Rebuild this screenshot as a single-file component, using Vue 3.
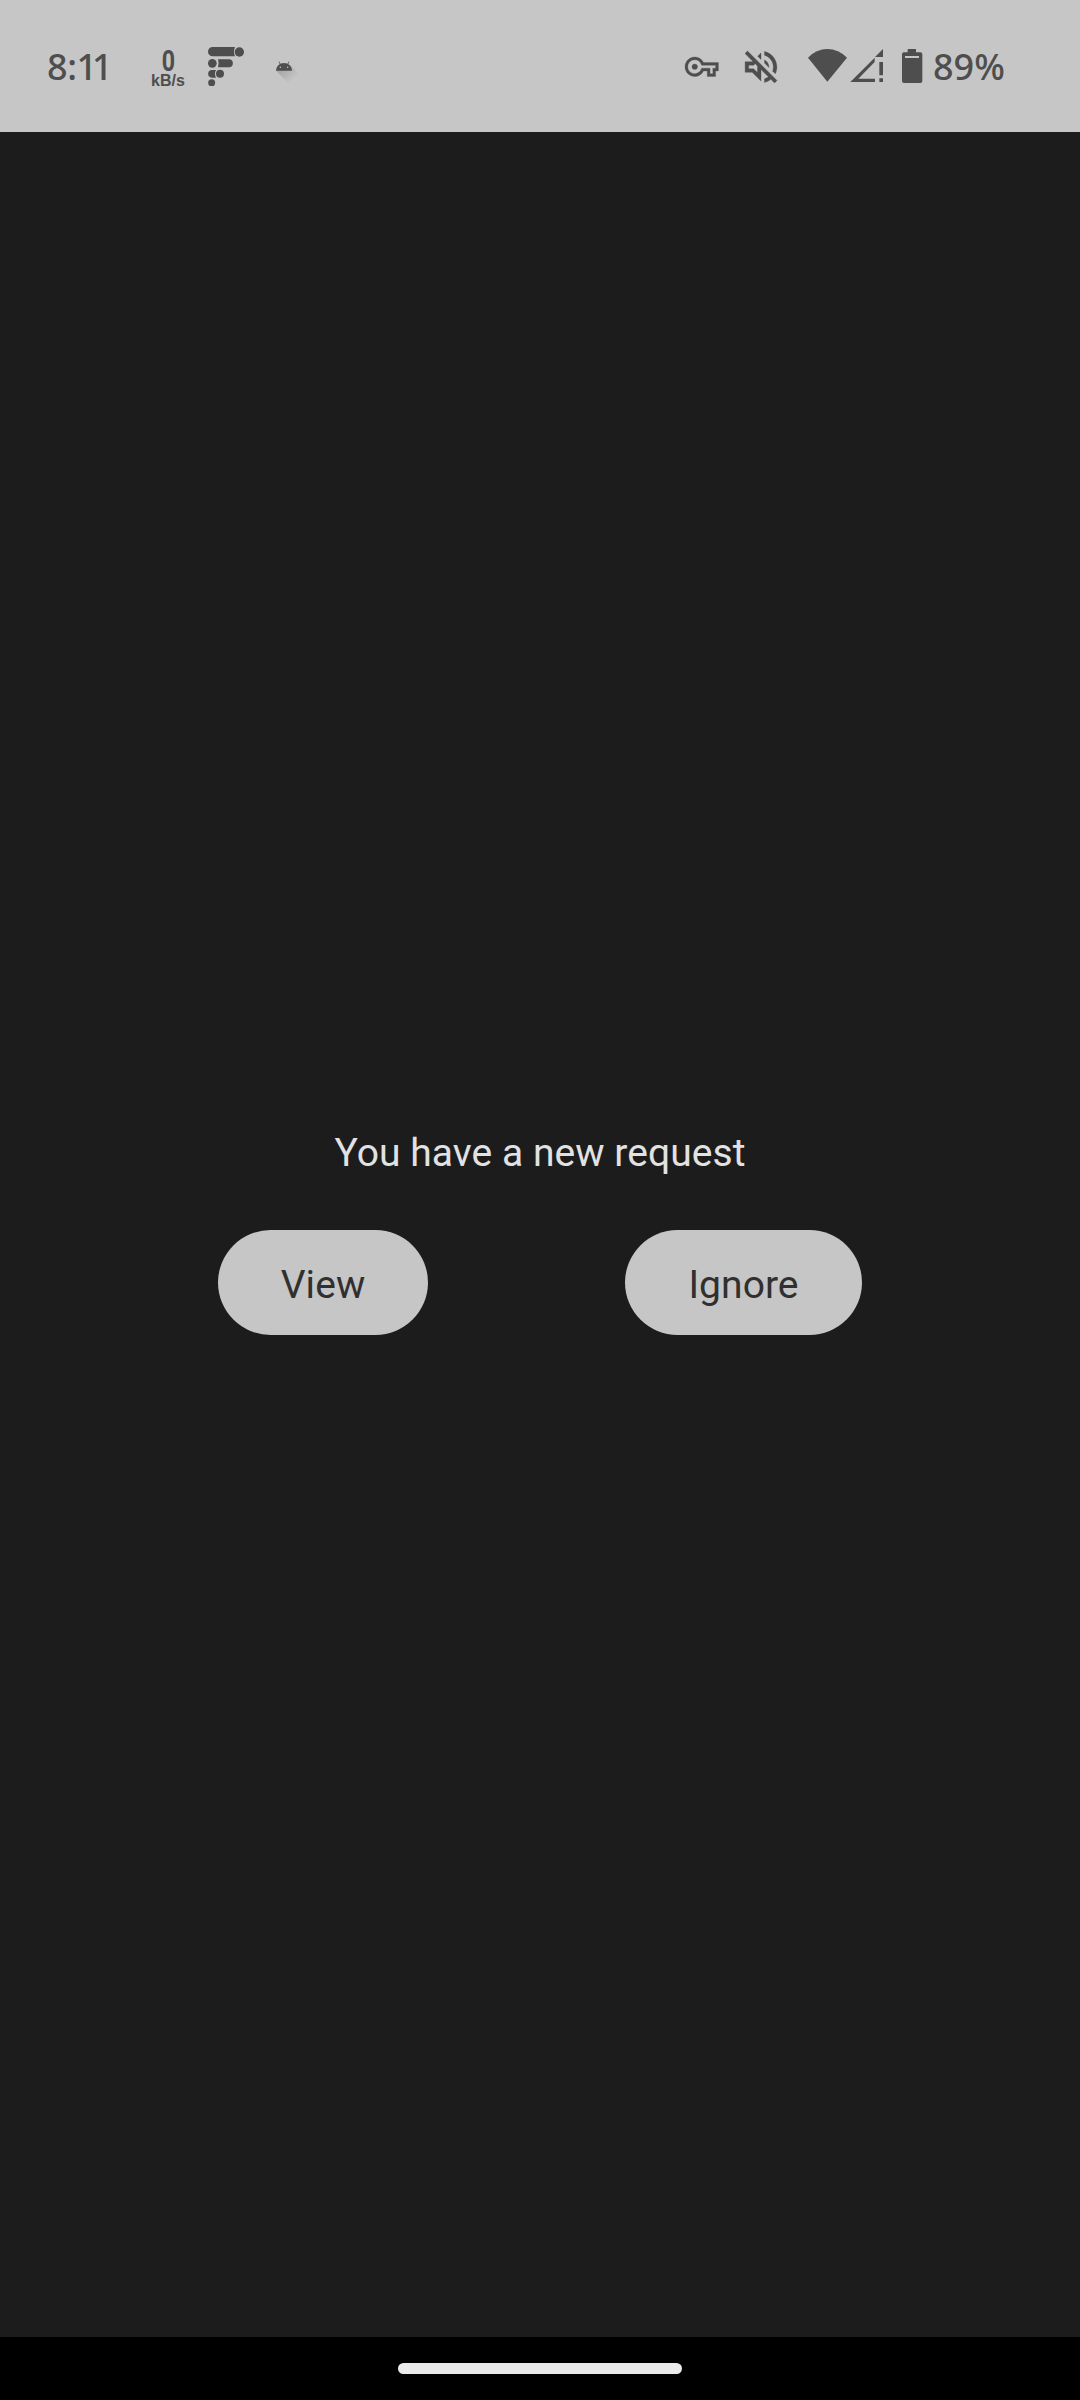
<script setup>
const actions = [
  { label: 'View', kind: 'view' },
  { label: 'Ignore', kind: 'ignore' },
]
</script>

<template>
  <div class="screen">
    <header class="status">
      <span class="time">8:<span class="minutes">11</span></span>
      <div class="speed">
        <span class="rate">0</span>
        <span class="unit">kB/s</span>
      </div>
      <svg class="beads" width="38" height="40" viewBox="51 48 114 120">
        <path d="M68 51H135Q129 65 135 79H68A14 14 0 0 1 68 51ZM84 88H119A12.3 12.3 0 0 1 119 112H84Q88 100 84 88ZM66 120H78Q72 131 78 143H66A11.5 11.5 0 0 1 66 120Z" />
        <circle cx="148" cy="66" r="14" />
        <circle cx="67" cy="100" r="13" />
        <circle cx="90" cy="131.500" r="12" />
        <circle cx="65" cy="158.500" r="10.500" />
      </svg>
      <svg class="droid" width="25" height="25" viewBox="255 90 75 75">
        <defs>
          <linearGradient id="shade" gradientUnits="userSpaceOnUse" x1="280" y1="115" x2="312" y2="147">
            <stop offset="0" stop-color="#a9a9a9" />
            <stop offset="1" stop-color="#c6c6c6" />
          </linearGradient>
        </defs>
        <path d="M258 122L300 104L330 134V165H301Z" fill="url(#shade)" />
        <path d="M258 122.500C259 108 269 99 282 99S305 108 306 122.500Z" />
        <path d="M267 95L271 103M297 95L293 103" stroke="#4e4e4e" stroke-width="2.500" />
        <circle cx="271" cy="112" r="2.200" fill="#c6c6c6" />
        <circle cx="293" cy="112" r="2.200" fill="#c6c6c6" />
      </svg>
      <svg class="key" width="33.400" height="19.500" viewBox="0 5 24 14">
        <path d="M22 19h-6v-4h-2.680c-1.140 2.420-3.600 4-6.320 4-3.860 0-7-3.140-7-7s3.140-7 7-7c2.720 0 5.170 1.580 6.320 4H24v6h-2v4zm-4-2h2v-4h2v-2H11.940l-.230-.670C11.010 8.340 9.110 7 7 7c-2.760 0-5 2.240-5 5s2.240 5 5 5c2.110 0 4.010-1.340 4.710-3.330l.230-.670H18v4zM7 14a2 2 0 1 1 0-4 2 2 0 0 1 0 4z" />
      </svg>
      <svg class="mute" width="32" height="32" viewBox="2.930 2.930 18.140 18.140">
        <path d="M4.340 2.930L2.930 4.340 7.290 8.700 7 9H3v6h4l5 5v-6.590l4.180 4.180c-.650.490-1.380.880-2.180 1.110v2.060c1.340-.300 2.570-.920 3.610-1.750l2.050 2.050 1.410-1.410L4.340 2.930zM10 15.170L7.830 13H5v-2h2.830l.880-.880L10 11.410v3.760zM19 12c0 .820-.150 1.610-.410 2.340l1.530 1.530c.560-1.170.880-2.480.880-3.870 0-4.280-2.990-7.860-7-8.770v2.060c2.890.860 5 3.540 5 6.710zm-7-8l-1.880 1.880L12 7.760zm4.500 8c0-1.770-1.020-3.290-2.500-4.030v1.790l2.480 2.480c.010-.080.020-.160.020-.240z" />
      </svg>
      <svg class="wifi" width="41" height="35" viewBox="51 54 123 105">
        <path d="M54 83Q79 57 112 57T171 83L112 155Z" />
      </svg>
      <svg class="signal" width="34" height="35" viewBox="180 54 102 105">
        <path d="M279 57V81H255ZM254 83V96L205 146H255V156H181ZM268 96H279V136H268ZM268 145H279V156H268Z" />
      </svg>
      <svg class="battery" width="22" height="36" viewBox="33 54 66 108">
        <path fill-rule="evenodd" d="M53 57H78V67H91Q97 67 97 73V153Q97 159 91 159H42Q36 159 36 153V73Q36 67 42 67H53ZM45 78V84H87V78Z" />
      </svg>
      <span class="percent">89%</span>
    </header>

    <main class="content">
      <p class="message">You have a new request</p>
      <div class="actions">
        <button v-for="a in actions" :key="a.kind" :class="['action', a.kind]">{{ a.label }}</button>
      </div>
    </main>

    <footer class="nav"><div class="handle"></div></footer>
  </div>
</template>

<style>
body { margin: 0; background: #1c1c1c; }
</style>

<style scoped>
.screen {
  width: 1080px;
  height: 2400px;
  display: flex;
  flex-direction: column;
  background: #1c1c1c;
  font-family: Roboto, sans-serif;
  overflow: hidden;
}
.status {
  height: 132px;
  flex: none;
  display: flex;
  align-items: flex-start;
  background: #c6c6c6;
  color: #4e4e4e;
}
.status svg { flex: none; fill: #4e4e4e; }
.key path, .mute path { stroke: #4e4e4e; stroke-width: .2px; }
.key, .mute { overflow: visible; }
.time, .percent {
  font: 500 36px/40px "Noto Sans", sans-serif;
  white-space: nowrap;
}
.time { width: 62px; margin: 47px 0 0 47px; letter-spacing: -.4px; }
.minutes { letter-spacing: -5.300px; }
.speed {
  width: 36px;
  margin: 47px 0 0 41px;
  display: flex;
  flex-direction: column;
  align-items: center;
  font-weight: 700;
}
.rate { font: 700 29px/28px Roboto, sans-serif; transform: scaleX(.8); }
.unit { font: 700 16px/16px "Liberation Sans", sans-serif; margin-top: -2px; }
.beads { margin: 46px 0 0 21px; }
.droid { margin: 60px 0 0 30px; }
.key { margin: 57px 0 0 384.500px; }
.mute { margin: 51px 0 0 27.100px; }
.wifi { margin: 48px 0 0 30px; }
.signal { margin: 48px 0 0 2px; }
.battery { margin: 48px 0 0 17px; }
.percent { margin: 47px 0 0 10px; }
.content {
  flex: 1;
  display: flex;
  flex-direction: column;
  align-items: center;
  padding-top: 996px;
}
.message {
  margin: 0;
  font-size: 39px;
  line-height: 50px;
  letter-spacing: .05px;
  color: #e2e2e2;
}
.actions { display: flex; gap: 197px; margin-top: 52px; }
.action {
  height: 105px;
  border: 0;
  padding: 4px 0 0;
  border-radius: 53px;
  background: #c6c6c6;
  color: #303030;
  font: 400 39px/50px Roboto, sans-serif;
  letter-spacing: .05px;
}
.view { width: 210px; }
.ignore { width: 237px; }
.nav {
  height: 63px;
  flex: none;
  display: flex;
  justify-content: center;
  background: #000;
}
.handle { width: 284px; height: 11px; margin-top: 26px; border-radius: 6px; background: #ebebeb; }
</style>
